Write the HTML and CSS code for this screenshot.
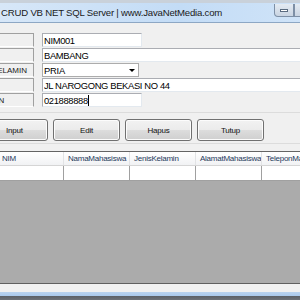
FILE: index.html
```html
<!DOCTYPE html>
<html lang="en">

<head>
  <meta charset="utf-8" />
  <title>CRUD VB NET SQL Server</title>
  <link rel="stylesheet" href="styles.css">
</head>

<body>
  <div class="window">
    <div class="titlebar">
      <span class="title">CRUD VB NET SQL Server | www.JavaNetMedia.com</span>
      <div class="controls">
        <span class="ctl ctl-min"><span class="glyph-min"></span></span>
        <span class="ctl ctl-max"><span class="glyph-max"></span></span>
      </div>
    </div>

    <div class="form">
      <div class="fields">
        <div class="label">NIM</div>
        <div class="field"><input type="text" class="box short" value="NIM001" /></div>

        <div class="label">NAMA</div>
        <div class="field"><input type="text" class="box long" value="BAMBANG" /></div>

        <div class="label">JENIS KELAMIN</div>
        <div class="field">
          <div class="combo">
            <span class="combo-text">PRIA</span>
            <span class="combo-arrow"></span>
          </div>
        </div>

        <div class="label">ALAMAT</div>
        <div class="field"><input type="text" class="box long" value="JL NAROGONG BEKASI NO 44" /></div>

        <div class="label">TELEPON</div>
        <div class="field">
          <div class="box short caret-box">021888888<span class="caret"></span></div>
        </div>
      </div>

      <div class="button-bar">
        <button class="btn">Input</button>
        <button class="btn">Edit</button>
        <button class="btn">Hapus</button>
        <button class="btn">Tutup</button>
      </div>

      <div class="grid">
        <div class="grid-row grid-head">
          <div class="cell">NIM</div>
          <div class="cell">NamaMahasiswa</div>
          <div class="cell">JenisKelamin</div>
          <div class="cell">AlamatMahasiswa</div>
          <div class="cell">TeleponMahasiswa</div>
        </div>
        <div class="grid-row grid-new">
          <div class="cell"></div>
          <div class="cell"></div>
          <div class="cell"></div>
          <div class="cell"></div>
          <div class="cell"></div>
        </div>
        <div class="grid-empty"></div>
      </div>

      <div class="form-bottom"></div>
    </div>

    <div class="frame-bottom"></div>
  </div>
</body>

</html>
```

FILE: styles.css
```css
/* Reset */
* {
  box-sizing: border-box;
  margin: 0;
  padding: 0;
}

body {
  width: 300px;
  height: 300px;
  overflow: hidden;
  background: #f0f0f0;
  font-family: "Liberation Sans", Arial, sans-serif;
}

.window {
  width: 300px;
  height: 300px;
  display: flex;
  flex-direction: column;
  overflow: hidden;
}

/* Title bar */
.titlebar {
  height: 23px;
  flex-shrink: 0;
  display: flex;
  align-items: flex-start;
  justify-content: space-between;
  border-top: 3px solid #c9d1da;
  border-bottom: 1px solid #8da7c4;
  background: linear-gradient(to right, #d7e7f8, #c3dcf6 60%, #cfe3f8);
}

.title {
  font-size: 9.6px;
  color: #1a1a1a;
  padding: 4px 0 0 1px;
  letter-spacing: -0.2px;
  white-space: nowrap;
}

.controls {
  display: flex;
  margin-top: 1px;
  margin-right: -14px;
}

.ctl {
  width: 20px;
  height: 13px;
  display: flex;
  align-items: center;
  justify-content: center;
  border: 1px solid #7d8fa6;
  border-top: none;
  background: linear-gradient(#e4ebf3, #c9d4e2);
}

.ctl-min {
  border-radius: 0 0 0 4px;
}

.glyph-min {
  width: 8px;
  height: 3px;
  border: 1px solid #5a6b80;
  background: #fff;
}

.glyph-max {
  width: 8px;
  height: 7px;
  border: 1px solid #5a6b80;
  border-top-width: 2px;
  background: #fff;
}

/* Form body */
.form {
  flex: 1;
  display: flex;
  flex-direction: column;
  background: #f0f0f0;
}

.fields {
  display: grid;
  grid-template-columns: 70px 1fr;
  column-gap: 8px;
  row-gap: 1px;
  margin: 10px 0 0 -36px;
  width: 360px;
}

.label {
  height: 14px;
  font-size: 8px;
  color: #202020;
  padding: 2px 0 0 3px;
  border-top: 1px solid #a0a0a0;
  border-right: 1px solid #a0a0a0;
  border-bottom: 1px solid #ffffff;
  white-space: nowrap;
  overflow: hidden;
}

.field {
  height: 14px;
  display: flex;
}

.box {
  height: 14px;
  font-family: "Liberation Sans", Arial, sans-serif;
  font-size: 9.4px;
  color: #000;
  background: #fff;
  border: 1px solid #abadb3;
  border-color: #abadb3 #e3e9ef #e3e9ef #abadb3;
  padding: 0 0 0 1px;
  outline: none;
  letter-spacing: -0.35px;
}

.short {
  width: 100px;
}

.long {
  width: 280px;
}

.caret-box {
  display: flex;
  align-items: center;
}

.caret {
  width: 1px;
  height: 11px;
  background: #000;
}

.combo {
  width: 97px;
  height: 14px;
  display: flex;
  align-items: center;
  justify-content: space-between;
  background: #fff;
  border: 1px solid #acacac;
  font-size: 9.4px;
  letter-spacing: -0.2px;
  padding-left: 1px;
}

.combo-arrow {
  width: 0;
  height: 0;
  margin-right: 3px;
  border-left: 3px solid transparent;
  border-right: 3px solid transparent;
  border-top: 3px solid #000;
}

/* Buttons */
.button-bar {
  display: flex;
  gap: 5px;
  margin: 5px 0 0 -19px;
  padding: 6px 0 2px;
  border-top: 1px solid #dcdcdc;
  border-bottom: 1px solid #dcdcdc;
  height: 32px;
}

.btn {
  width: 67px;
  height: 22px;
  font-family: "Liberation Sans", Arial, sans-serif;
  font-size: 8px;
  letter-spacing: -0.2px;
  color: #111;
  border: 1px solid #707070;
  border-radius: 3px;
  background: linear-gradient(#f2f2f2 0%, #ebebeb 50%, #dddddd 51%, #cfcfcf 100%);
  box-shadow: inset 0 0 0 1px #fcfcfc;
}

/* Data grid */
.grid {
  margin: 7px 0 0 -2px;
  width: 340px;
  display: flex;
  flex-direction: column;
  flex: 1;
  border-top: 1px solid #646464;
  border-bottom: 1px solid #5f5f5f;
  background: #ababab;
}

.grid-row {
  display: flex;
}

.cell {
  width: 66px;
  flex-shrink: 0;
  border-right: 1px solid #c5c5c5;
  font-size: 8px;
  letter-spacing: -0.25px;
  white-space: nowrap;
  overflow: hidden;
}

.grid-head {
  height: 14px;
  background: linear-gradient(#ffffff, #f1f2f4);
  border-bottom: 1px solid #d5d5d5;
}

.grid-head .cell {
  color: #1e395b;
  padding: 2px 0 0 4px;
  border-right-color: #e2e3e5;
}

.grid-new {
  height: 15px;
  background: #fff;
  border-bottom: 1px solid #a0a0a0;
}

.grid-new .cell {
  border-right-color: #a0a0a0;
}

.grid-empty {
  flex: 1;
}

.form-bottom {
  height: 8px;
  flex-shrink: 0;
}

.frame-bottom {
  height: 8px;
  flex-shrink: 0;
  background: linear-gradient(#b9d3ef 0, #a9c9ec 4px, #5a5f66 4px, #6d7178 8px);
}
```
